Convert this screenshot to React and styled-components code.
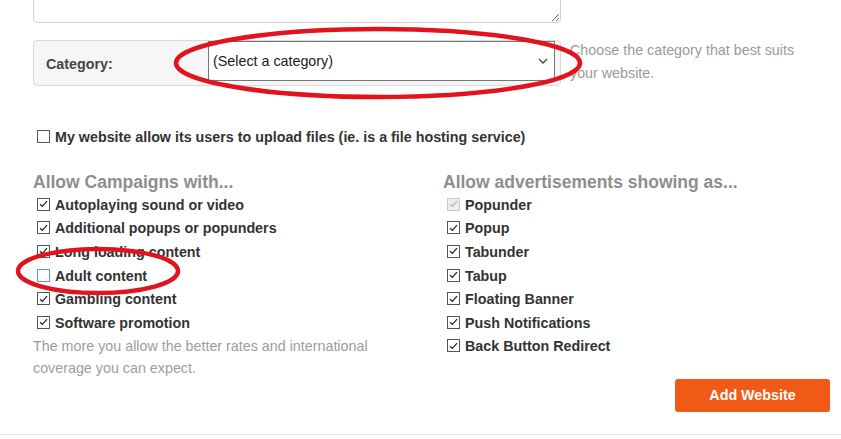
import React from "react";
import styled, { createGlobalStyle } from "styled-components";

const Global = createGlobalStyle`
  html, body { margin: 0; padding: 0; background: #fff; }
  body { font-family: "Liberation Sans", Arial, sans-serif; overflow: hidden; }
`;

const Page = styled.div`
  position: relative;
  width: 841px;
  height: 439px;
  overflow: hidden;
`;

const Content = styled.div`
  padding-left: 33px;
`;

const Textarea = styled.textarea`
  display: block;
  box-sizing: border-box;
  width: 528px;
  height: 53px;
  margin: -30px 0 0 0;
  border: 1px solid #cfcfcf;
  border-radius: 4px;
  background: #fff;
  resize: vertical;
  outline: none;
`;

const CategoryRow = styled.div`
  display: flex;
  align-items: flex-start;
  margin-top: 17px;
`;

const Group = styled.div`
  box-sizing: border-box;
  width: 528px;
  height: 46px;
  display: flex;
  align-items: flex-start;
  background: #f6f6f6;
  border: 1px solid #d9d9d9;
  border-radius: 4px;
`;

const GroupLabel = styled.div`
  box-sizing: border-box;
  width: 174px;
  height: 44px;
  padding-left: 12px;
  display: flex;
  align-items: center;
  font-size: 14.3px;
  font-weight: bold;
  color: #444;
  padding-top: 1px;
`;

const Select = styled.div`
  box-sizing: border-box;
  width: 347px;
  height: 40px;
  display: flex;
  align-items: center;
  justify-content: space-between;
  padding: 0 6px 0 4px;
  background: #fff;
  border: 1px solid #767676;
  font-size: 14.3px;
  color: #1a1a1a;
`;

const HelpText = styled.div`
  width: 250px;
  margin: -1px 0 0 9px;
  font-size: 14.3px;
  line-height: 23px;
  color: #9a9a9a;
`;

const Item = styled.div`
  display: flex;
  align-items: center;
  height: ${(p) => p.$h || "23.6px"};
  padding-left: 4px;
  font-size: 14.3px;
  font-weight: bold;
  color: #333;
  white-space: nowrap;
`;

const UploadItem = styled(Item)`
  margin-top: 41px;
`;

const Box = styled.span`
  box-sizing: border-box;
  width: 13px;
  height: 13px;
  margin-right: 5px;
  margin-top: -1px;
  flex: none;
  display: flex;
  align-items: center;
  justify-content: center;
  background: ${(p) => (p.$disabled ? "#ececec" : "#fff")};
  border: 1px solid
    ${(p) => (p.$disabled ? "#c9c9c9" : p.$focus ? "#5b9bb5" : "#555")};
`;

const Columns = styled.div`
  display: grid;
  grid-template-columns: 410px 1fr;
  margin-top: 24px;
`;

const Heading = styled.div`
  font-size: 17.5px;
  line-height: 22px;
  font-weight: bold;
  color: #8e8e8e;
  white-space: nowrap;
`;

const Note = styled.div`
  font-size: 14.3px;
  line-height: 22px;
  color: #9d9d9d;
`;

const Footer = styled.div`
  display: flex;
  justify-content: flex-end;
  padding-right: 11px;
  padding-bottom: 22px;
  border-bottom: 1px solid #e6e6e6;
`;

const Button = styled.button`
  width: 155px;
  height: 33px;
  border: none;
  border-radius: 3px;
  background: #f15a16;
  color: #fff;
  font-family: "Liberation Sans", Arial, sans-serif;
  font-size: 14.3px;
  font-weight: bold;
  cursor: pointer;
`;

const Overlay = styled.svg`
  position: absolute;
  left: 0;
  top: 0;
  pointer-events: none;
`;

const Check = ({ checked = true, disabled, focus }) => (
  <Box $disabled={disabled} $focus={focus}>
    {checked && (
      <svg width="9" height="8" viewBox="0 0 9 8">
        <path
          d="M1 4.2 L3.4 6.5 L8 1.2"
          fill="none"
          stroke={disabled ? "#b5b5b5" : "#222"}
          strokeWidth="1.2"
        />
      </svg>
    )}
  </Box>
);

const Chevron = () => (
  <svg width="10" height="6" viewBox="0 0 10 6">
    <path d="M1 1 L5 5 L9 1" fill="none" stroke="#444" strokeWidth="1.3" />
  </svg>
);

const campaigns = [
  { t: "Autoplaying sound or video", c: true },
  { t: "Additional popups or popunders", c: true },
  { t: "Long loading content", c: true },
  { t: "Adult content", c: false, focus: true },
  { t: "Gambling content", c: true },
  { t: "Software promotion", c: true },
];

const formats = [
  { t: "Popunder", c: true, disabled: true },
  { t: "Popup", c: true },
  { t: "Tabunder", c: true },
  { t: "Tabup", c: true },
  { t: "Floating Banner", c: true },
  { t: "Push Notifications", c: true },
  { t: "Back Button Redirect", c: true },
];

export default function App() {
  return (
    <Page>
      <Global />
      <Content>
        <Textarea readOnly />
        <CategoryRow>
          <Group>
            <GroupLabel>Category:</GroupLabel>
            <Select>
              <span>(Select a category)</span>
              <Chevron />
            </Select>
          </Group>
          <HelpText>Choose the category that best suits your website.</HelpText>
        </CategoryRow>
        <UploadItem $h="20px">
          <Check checked={false} />
          My website allow its users to upload files (ie. is a file hosting service)
        </UploadItem>
        <Columns>
          <div>
            <Heading>Allow Campaigns with...</Heading>
            {campaigns.map((i) => (
              <Item key={i.t}>
                <Check checked={i.c} focus={i.focus} />
                {i.t}
              </Item>
            ))}
            <Note>
              The more you allow the better rates and international
              <br />
              coverage you can expect.
            </Note>
          </div>
          <div>
            <Heading>Allow advertisements showing as...</Heading>
            {formats.map((i) => (
              <Item key={i.t}>
                <Check checked={i.c} disabled={i.disabled} />
                {i.t}
              </Item>
            ))}
          </div>
        </Columns>
      </Content>
      <Footer>
        <Button>Add Website</Button>
      </Footer>
      <Overlay width="841" height="439">
        <ellipse cx="378" cy="63" rx="202" ry="34" fill="none" stroke="#e3131d" strokeWidth="4.5" />
        <ellipse cx="98" cy="271" rx="80" ry="22" fill="none" stroke="#e3131d" strokeWidth="4.5" />
      </Overlay>
    </Page>
  );
}
